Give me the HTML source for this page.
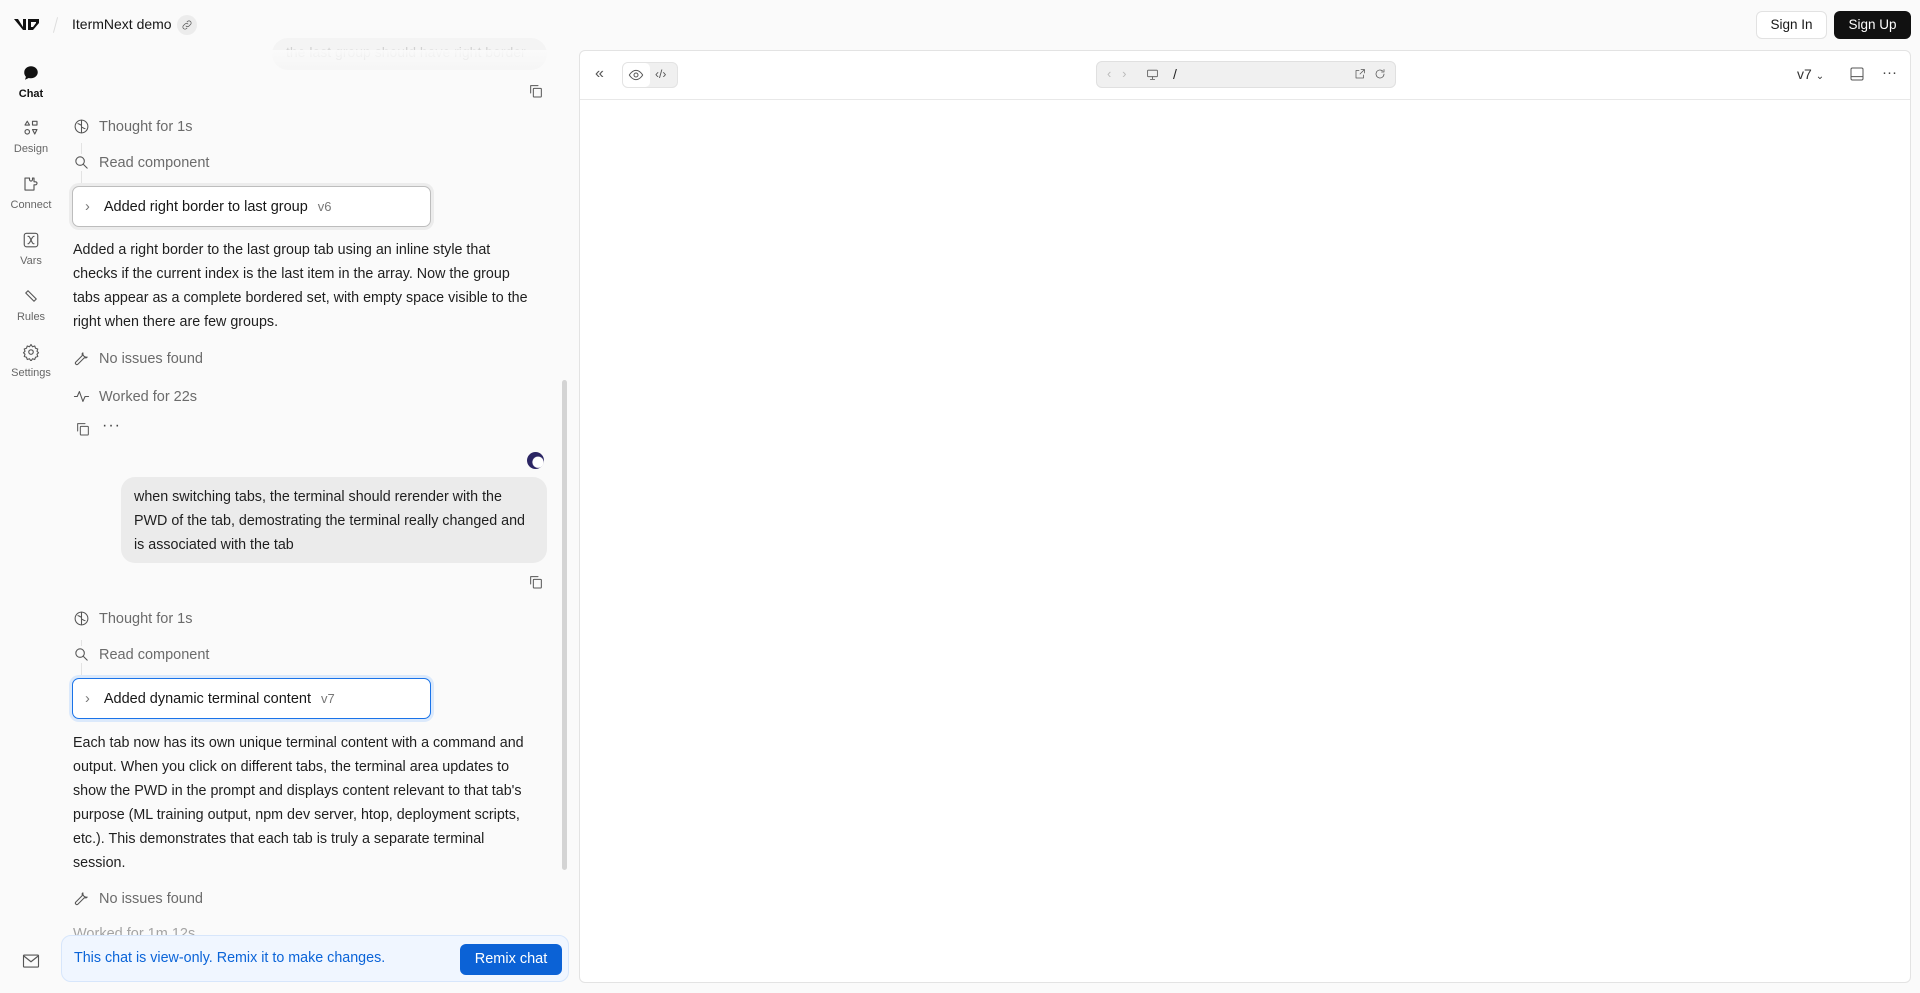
<!DOCTYPE html>
<html><head><meta charset="utf-8"><style>
*{box-sizing:border-box;margin:0;padding:0}
body{width:1920px;height:993px;background:#fafafa;font-family:"Liberation Sans",sans-serif;color:#171717;position:relative;overflow:hidden;font-size:14px}
.abs{position:absolute}
.nav{position:absolute;left:0;width:62px;text-align:center;font-size:11px;color:#666}
.nav svg{display:block;margin:0 auto 6px}
.step{position:absolute;left:73px;color:#6b6b6b;font-size:14.5px;display:flex;align-items:center;gap:9px}
.step svg{width:17px;height:17px}
.card{position:absolute;left:72px;width:359px;height:41px;background:#fff;border:1px solid #bdbdbd;border-radius:7px;box-shadow:0 0 0 3px #ececec;display:flex;align-items:center;padding-left:12px;font-size:14.5px}
.card .v{color:#777;font-size:13px;margin-left:10px}
.p{position:absolute;left:73px;width:490px;font-size:14.3px;line-height:24px;color:#1f1f1f;white-space:nowrap}
.ic{stroke:#555;fill:none;stroke-width:1.5;stroke-linecap:round;stroke-linejoin:round}
</style></head><body>
<svg class="abs" style="left:13px;top:17px" width="28" height="15" viewBox="0 0 28 15"><path d="M1 2h4l5 8V2h3v11h-3L1 2z" fill="#111"/><path d="M15 2h11v4l-6 7h-5V2zm3 3v5h2l3-4V5z" fill="#111"/></svg>
<div class="abs" style="left:55px;top:17px;width:1px;height:16px;background:#ddd;transform:rotate(15deg)"></div>
<div class="abs" style="left:72px;top:16px;font-size:14px;font-weight:500">ItermNext demo</div>
<div class="abs" style="left:177px;top:15px;width:20px;height:20px;border-radius:50%;background:#ececec"></div>
<svg class="abs" style="left:181px;top:19px" width="12" height="12" viewBox="0 0 24 24"><path class="ic" d="M10 14a4 4 0 0 0 6 0l3-3a4 4 0 0 0-6-6l-1 1M14 10a4 4 0 0 0-6 0l-3 3a4 4 0 0 0 6 6l1-1" stroke-width="2.5"/></svg>
<div class="abs" style="left:1756px;top:11px;width:71px;height:28px;border:1px solid #e2e2e2;background:#fff;border-radius:6px;font-size:13.5px;font-weight:500;text-align:center;line-height:26px">Sign In</div>
<div class="abs" style="left:1834px;top:11px;width:77px;height:28px;background:#111;color:#fff;border-radius:6px;font-size:13.5px;font-weight:500;text-align:center;line-height:28px">Sign Up</div>
<div class="nav" style="top:64px;color:#111;font-weight:600"><svg width="18" height="18" viewBox="0 0 24 24"><path d="M12 3c5 0 9 3.6 9 8s-4 8-9 8c-1 0-2-.1-3-.4L4 21l1.3-4A7.6 7.6 0 0 1 3 11c0-4.4 4-8 9-8z" fill="#111"/></svg>Chat</div>
<div class="nav" style="top:119px"><svg width="18" height="18" viewBox="0 0 24 24"><path class="ic" d="M7 3l3 5H4zM14 3h6v5h-6zM7 14a3 3 0 1 1 0 6 3 3 0 0 1 0-6zM14 14h6l-3 6z"/></svg>Design</div>
<div class="nav" style="top:175px"><svg width="18" height="18" viewBox="0 0 24 24"><path class="ic" d="M4 4h6v2a2 2 0 0 0 4 0V4h2v5h2a2 2 0 0 1 0 4h-2v7H4z"/></svg>Connect</div>
<div class="nav" style="top:231px"><svg width="18" height="18" viewBox="0 0 24 24"><rect class="ic" x="3" y="3" width="18" height="18" rx="3"/><path class="ic" d="M8 7c2 0 2 1 4 5s2 5 4 5M16 7c-2 0-3 3-4 5s-2 5-4 5"/></svg>Vars</div>
<div class="nav" style="top:287px"><svg width="18" height="18" viewBox="0 0 24 24"><path class="ic" d="M5 8l3-3 11 11-3 3z"/></svg>Rules</div>
<div class="nav" style="top:343px"><svg width="18" height="18" viewBox="0 0 24 24"><circle class="ic" cx="12" cy="12" r="3"/><path class="ic" d="M12 2l2 3 3-1 1 3 3 1-1 3 2 2-2 2 1 3-3 1-1 3-3-1-2 3-2-3-3 1-1-3-3-1 1-3-2-2 2-2-1-3 3-1 1-3 3 1z"/></svg>Settings</div>
<svg class="abs" style="left:22px;top:953px" width="18" height="16" viewBox="0 0 24 20"><rect class="ic" x="2" y="2" width="20" height="16" rx="1"/><path class="ic" d="M2 3l10 8 10-8"/></svg>
<div class="abs" style="left:272px;top:38px;width:275px;height:32px;background:#f0f0f0;border-radius:16px;opacity:.5;color:#aaa;font-size:14px;padding:6px 14px">the last group should have right border</div>
<div class="abs" style="left:60px;top:50px;width:500px;height:28px;background:linear-gradient(#fafafa,rgba(250,250,250,0))"></div>
<svg class="abs" style="left:528px;top:83px" width="16" height="16" viewBox="0 0 24 24"><rect class="ic" x="8" y="8" width="12" height="13" rx="1"/><path class="ic" d="M4 15V4h11"/></svg>
<div class="abs" style="left:81px;top:143px;width:1px;height:40px;background:#e3e3e3"></div>
<div class="step" style="top:118px"><svg viewBox="0 0 24 24"><circle class="ic" cx="12" cy="12" r="9"/><path class="ic" d="M12 3v18M7 8c2 0 3 2 5 2M17 15c-2 0-3-2-5-2"/></svg>Thought for 1s</div>
<div class="step" style="top:154px;background:#fafafa"><svg viewBox="0 0 24 24"><circle class="ic" cx="10" cy="10" r="6"/><path class="ic" d="M15 15l5 5"/></svg>Read component</div>
<div class="card" style="top:186px"><span style="color:#777;margin-right:14px">›</span>Added right border to last group<span class="v">v6</span></div>
<div class="p" style="top:238px">Added a right border to the last group tab using an inline style that<br>checks if the current index is the last item in the array. Now the group<br>tabs appear as a complete bordered set, with empty space visible to the<br>right when there are few groups.</div>
<div class="step" style="top:350px"><svg viewBox="0 0 24 24"><path class="ic" d="M14 4a5 5 0 0 0 6 6l-1 1-3-0-9 9a2 2 0 0 1-3-3l9-9 0-3z"/></svg>No issues found</div>
<div class="step" style="top:388px"><svg viewBox="0 0 24 24"><path class="ic" d="M2 12h4l3-7 5 14 3-7h5"/></svg>Worked for 22s</div>
<svg class="abs" style="left:75px;top:421px" width="16" height="16" viewBox="0 0 24 24"><rect class="ic" x="8" y="8" width="12" height="13" rx="1"/><path class="ic" d="M4 15V4h11"/></svg>
<div class="abs" style="left:102px;top:417px;font-size:16px;color:#444;letter-spacing:1px">···</div>
<div class="abs" style="left:527px;top:452px;width:17px;height:17px;border-radius:50%;background:radial-gradient(circle at 65% 60%,#fff 0 35%,#2b2563 40%)"></div>
<div class="abs" style="left:121px;top:477px;width:426px;height:86px;background:#ebebeb;border-radius:14px;padding:8px 13px;font-size:14.3px;line-height:24px;color:#1f1f1f">when switching tabs, the terminal should rerender with the PWD of the tab, demostrating the terminal really changed and is associated with the tab</div>
<svg class="abs" style="left:528px;top:574px" width="16" height="16" viewBox="0 0 24 24"><rect class="ic" x="8" y="8" width="12" height="13" rx="1"/><path class="ic" d="M4 15V4h11"/></svg>
<div class="abs" style="left:81px;top:640px;width:1px;height:40px;background:#e3e3e3"></div>
<div class="step" style="top:610px"><svg viewBox="0 0 24 24"><circle class="ic" cx="12" cy="12" r="9"/><path class="ic" d="M12 3v18M7 8c2 0 3 2 5 2M17 15c-2 0-3-2-5-2"/></svg>Thought for 1s</div>
<div class="step" style="top:646px;background:#fafafa"><svg viewBox="0 0 24 24"><circle class="ic" cx="10" cy="10" r="6"/><path class="ic" d="M15 15l5 5"/></svg>Read component</div>
<div class="card" style="top:678px;border-color:#1a73e8;box-shadow:0 0 0 3px #dbe9fb"><span style="color:#777;margin-right:14px">›</span>Added dynamic terminal content<span class="v">v7</span></div>
<div class="p" style="top:731px">Each tab now has its own unique terminal content with a command and<br>output. When you click on different tabs, the terminal area updates to<br>show the PWD in the prompt and displays content relevant to that tab's<br>purpose (ML training output, npm dev server, htop, deployment scripts,<br>etc.). This demonstrates that each tab is truly a separate terminal<br>session.</div>
<div class="step" style="top:890px"><svg viewBox="0 0 24 24"><path class="ic" d="M14 4a5 5 0 0 0 6 6l-1 1-3-0-9 9a2 2 0 0 1-3-3l9-9 0-3z"/></svg>No issues found</div>
<div class="step" style="top:926px;opacity:.6">Worked for 1m 12s</div>
<div class="abs" style="left:562px;top:380px;width:5px;height:490px;background:#d4d4d4;border-radius:3px"></div>
<div class="abs" style="left:61px;top:935px;width:508px;height:47px;background:#f0f6ff;border:1px solid #d7e6fb;border-radius:10px"></div>
<div class="abs" style="left:74px;top:950px;color:#0b64d8;font-size:14.3px">This chat is view-only. Remix it to make changes.</div>
<div class="abs" style="left:460px;top:944px;width:102px;height:31px;background:#0b62d6;color:#fff;border-radius:6px;font-size:14.5px;font-weight:500;text-align:center;line-height:31px">Remix chat</div>
<div class="abs" style="left:579px;top:50px;width:1332px;height:933px;background:#fff;border:1px solid #e3e3e3;border-radius:6px"></div>
<div class="abs" style="left:580px;top:99px;width:1330px;height:1px;background:#e8e8e8"></div>
<div class="abs" style="left:595px;top:65px;color:#555;font-size:16px">«</div>
<div class="abs" style="left:622px;top:62px;width:56px;height:26px;background:#f0f0f0;border:1px solid #e3e3e3;border-radius:6px"></div>
<div class="abs" style="left:623px;top:63px;width:27px;height:24px;background:#fff;border-radius:5px"></div>
<svg class="abs" style="left:628px;top:67px" width="16" height="16" viewBox="0 0 24 24"><path class="ic" d="M2 12s4-7 10-7 10 7 10 7-4 7-10 7S2 12 2 12z"/><circle class="ic" cx="12" cy="12" r="3"/></svg>
<div class="abs" style="left:655px;top:67px;color:#555;font-size:12px">‹/›</div>
<div class="abs" style="left:1096px;top:61px;width:300px;height:27px;background:#f0f0f0;border:1px solid #e0e0e0;border-radius:6px"></div>
<div class="abs" style="left:1107px;top:66px;color:#bbb;font-size:13px">‹&nbsp;&nbsp;&nbsp;›</div>
<svg class="abs" style="left:1146px;top:68px" width="13" height="13" viewBox="0 0 24 24"><rect class="ic" x="3" y="4" width="18" height="12" rx="1" stroke-width="2.5"/><path class="ic" d="M12 16v5M8 21h8" stroke-width="2.5"/></svg>
<div class="abs" style="left:1173px;top:66px;color:#222;font-size:14px">/</div>
<svg class="abs" style="left:1354px;top:68px" width="12" height="12" viewBox="0 0 24 24"><path class="ic" d="M14 3h7v7M21 3l-9 9M19 14v6H4V5h6" stroke-width="2.5"/></svg>
<svg class="abs" style="left:1374px;top:68px" width="12" height="12" viewBox="0 0 24 24"><path class="ic" d="M20 12a8 8 0 1 1-3-6.3M20 3v5h-5" stroke-width="2.5"/></svg>
<div class="abs" style="left:1797px;top:66px;font-size:14px;color:#333">v7 <span style="font-size:10px">⌄</span></div>
<svg class="abs" style="left:1849px;top:66px" width="16" height="16" viewBox="0 0 24 24"><rect class="ic" x="3" y="3" width="18" height="18" rx="2"/><path class="ic" d="M3 16h18"/></svg>
<div class="abs" style="left:1882px;top:64px;font-size:15px;color:#444">···</div>
</body></html>
